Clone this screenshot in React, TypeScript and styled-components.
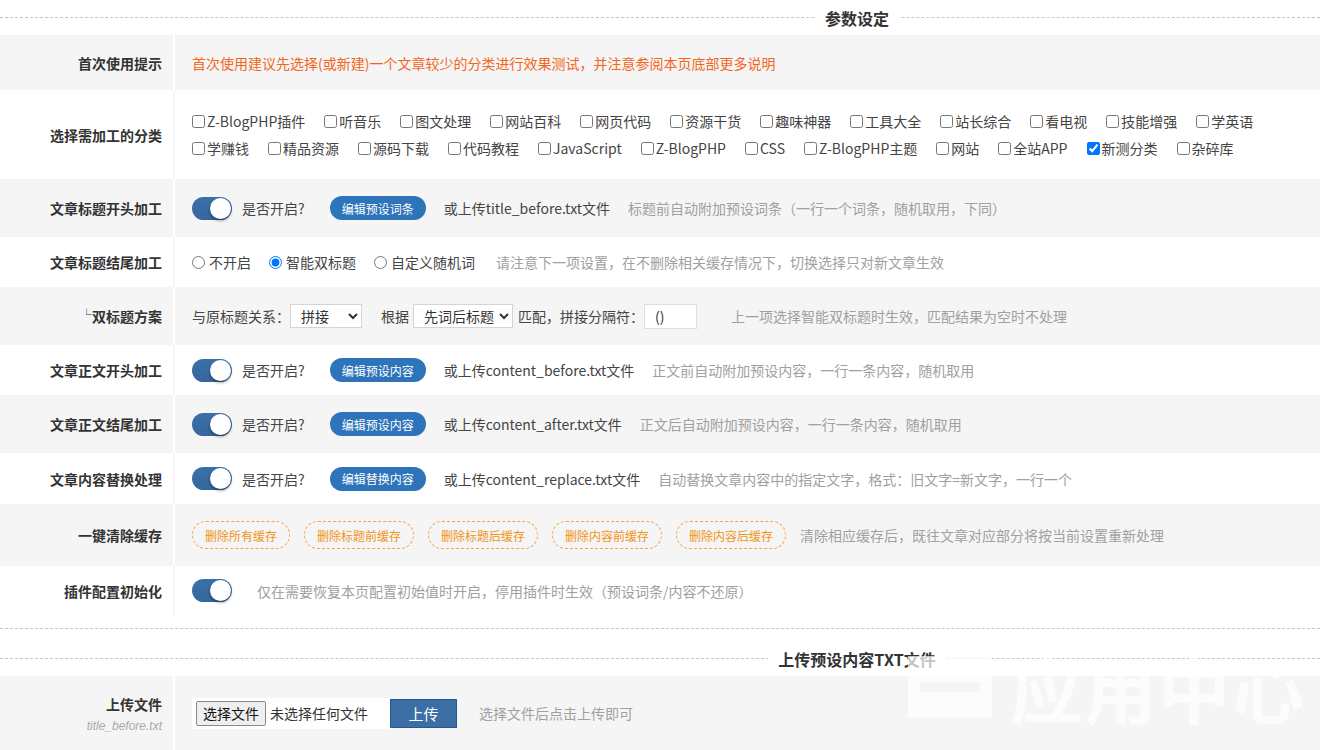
import React from 'react';
import styled, { createGlobalStyle } from 'styled-components';

const Global = createGlobalStyle`
  html, body { margin: 0; padding: 0; background: #fff; }
  body {
    width: 1320px;
    overflow: hidden;
    font-family: "Noto Sans CJK SC", "Noto Sans", sans-serif;
    font-size: 14px;
    color: #444;
  }
  * { box-sizing: border-box; }
`;

const Page = styled.div`
  position: relative;
  width: 1320px;
  height: 750px;
  overflow: hidden;
`;

const SectionHead = styled.div`
  position: relative;
  height: 35px;
  display: flex;
  align-items: center;
  &::before {
    content: '';
    position: absolute;
    left: 0;
    right: 0;
    top: 17px;
    border-top: 1px dashed #c6c6c6;
  }
`;

const SectionTitle = styled.span`
  position: relative;
  margin-left: 857px;
  transform: translateX(-50%);
  background: #fff;
  padding: 0 10px;
  font-size: 16px;
  font-weight: bold;
  color: #333;
  line-height: 20px;
`;

const Divider = styled.div`
  height: 26px;
  padding-top: 13px;
  &::after {
    content: '';
    display: block;
    border-top: 1px dashed #c6c6c6;
  }
`;

const Row = styled.div<{ $alt?: boolean; $h: number }>`
  display: grid;
  grid-template-columns: 175px 1fr;
  min-height: ${(p) => p.$h}px;
  background: ${(p) => (p.$alt ? '#f5f5f5' : '#fff')};
`;

const Label = styled.div<{ $alt?: boolean }>`
  display: flex;
  flex-direction: column;
  justify-content: center;
  align-items: flex-end;
  padding-right: 11px;
  font-weight: bold;
  color: #333;
  font-size: 14px;
  border-right: 2px solid ${(p) => (p.$alt ? '#fff' : '#f6f6f6')};
`;

const Corner = styled.span`
  font-size: 11px;
  font-weight: normal;
  align-self: flex-start;
`;

const LabelLine = styled.span`
  display: inline-flex;
  align-items: flex-start;
`;

const SubLabel = styled.span`
  margin-top: 5px;
  font-weight: normal;
  font-style: italic;
  font-size: 12px;
  color: #aaa;
  font-family: "Liberation Sans", "Noto Sans CJK SC", sans-serif;
`;

const Cell = styled.div<{ $gap?: number }>`
  display: flex;
  align-items: center;
  gap: ${(p) => p.$gap ?? 18}px;
  padding-left: 17px;
`;

const Notice = styled.span`
  color: #f3661c;
`;

const Hint = styled.span<{ $ml?: number }>`
  color: #a0a0a0;
  margin-left: ${(p) => p.$ml ?? 0}px;
`;

const Text = styled.span`
  color: #444;
`;

const CatList = styled.div`
  display: flex;
  flex-direction: column;
  padding-left: 17px;
  justify-content: center;
`;

const CatLine = styled.div`
  display: flex;
  align-items: center;
  height: 27px;
`;

const Check = styled.label`
  display: inline-flex;
  align-items: center;
  margin-right: 19px;
  color: #444;
  input {
    margin: 0 2px 0 0;
    width: 13px;
    height: 13px;
  }
`;

const SwitchGroup = styled.span`
  display: inline-flex;
  align-items: center;
  gap: 10px;
  margin-right: 7px;
  color: #444;
`;

const Toggle = styled.span`
  position: relative;
  display: inline-block;
  width: 40px;
  height: 23px;
  border-radius: 12px;
  background: linear-gradient(#3c6fa9, #35669d);
  &::after {
    content: '';
    position: absolute;
    right: 1px;
    top: 1px;
    width: 21px;
    height: 21px;
    border-radius: 50%;
    background: #fff;
    box-shadow: 0 2px 3px rgba(0, 0, 0, 0.35);
  }
`;

const PillBtn = styled.span`
  display: inline-flex;
  align-items: center;
  height: 24px;
  padding: 0 12px;
  border-radius: 12px;
  background: #2e74ba;
  color: #fff;
  font-size: 12px;
`;

const Radio = styled.label`
  display: inline-flex;
  align-items: center;
  color: #444;
  input {
    margin: 1px 4px 0 0;
    width: 13px;
    height: 13px;
  }
`;

const Select = styled.select<{ $w: number }>`
  width: ${(p) => p.$w}px;
  height: 24px;
  border: 1px solid #d4d4d4;
  border-radius: 0;
  background: #fff;
  font-family: "Noto Sans CJK SC", sans-serif;
  font-size: 14px;
  color: #333;
  padding: 0 2px 0 6px;
`;

const TextInput = styled.input`
  width: 53px;
  height: 25px;
  border: 1px solid #ddd;
  padding: 0 0 0 10px;
  font-size: 14px;
  font-family: "Noto Sans CJK SC", sans-serif;
  color: #333;
`;

const Tight = styled.span<{ $l?: number; $r?: number }>`
  margin-left: ${(p) => p.$l ?? 0}px;
  margin-right: ${(p) => p.$r ?? 0}px;
  color: #444;
`;

const CacheBtn = styled.span`
  display: inline-flex;
  align-items: center;
  height: 28px;
  padding: 0 12px;
  border: 1px dashed #f2a548;
  border-radius: 14px;
  color: #f29418;
  font-size: 12px;
  background: transparent;
`;

const FileBox = styled.span`
  display: inline-flex;
  align-items: center;
  width: 198px;
  height: 31px;
  background: #fff;
  padding-left: 4px;
  margin-right: -18px;
  color: #333;
`;

const FileBtn = styled.span`
  display: inline-flex;
  align-items: center;
  height: 25px;
  padding: 0 6px;
  border: 1px solid #8a8a8a;
  border-radius: 2px;
  background: #efefef;
  color: #111;
  margin-right: 4px;
`;

const UploadBtn = styled.span`
  display: inline-flex;
  align-items: center;
  justify-content: center;
  width: 67px;
  height: 29px;
  background: #3a6ea5;
  border: 1px solid #245a8f;
  color: #fff;
  font-size: 15px;
  margin-right: 4px;
`;

const Watermark = styled.div`
  position: absolute;
  left: 904px;
  top: 634px;
  display: flex;
  align-items: center;
  gap: 14px;
  color: rgba(255, 255, 255, 0.7);
  font-size: 72px;
  font-weight: bold;
  letter-spacing: 2px;
  pointer-events: none;
  font-family: "Noto Sans CJK SC", sans-serif;
`;

const cats1 = ['Z-BlogPHP插件', '听音乐', '图文处理', '网站百科', '网页代码', '资源干货', '趣味神器', '工具大全', '站长综合', '看电视', '技能增强', '学英语'];
const cats2 = ['学赚钱', '精品资源', '源码下载', '代码教程', 'JavaScript', 'Z-BlogPHP', 'CSS', 'Z-BlogPHP主题', '网站', '全站APP', '新测分类', '杂碎库'];

function SwitchRow({ alt, h, label, btn, file, hint }: { alt?: boolean; h: number; label: string; btn: string; file: string; hint: string }) {
  return (
    <Row $alt={alt} $h={h}>
      <Label $alt={alt}>{label}</Label>
      <Cell>
        <SwitchGroup>
          <Toggle />
          是否开启?
        </SwitchGroup>
        <PillBtn>{btn}</PillBtn>
        <Text>{file}</Text>
        <Hint>{hint}</Hint>
      </Cell>
    </Row>
  );
}

export default function App() {
  return (
    <Page>
      <Global />
      <SectionHead>
        <SectionTitle>参数设定</SectionTitle>
      </SectionHead>

      <Row $alt $h={55}>
        <Label $alt>首次使用提示</Label>
        <Cell>
          <Notice>首次使用建议先选择(或新建)一个文章较少的分类进行效果测试，并注意参阅本页底部更多说明</Notice>
        </Cell>
      </Row>

      <Row $h={89}>
        <Label>选择需加工的分类</Label>
        <CatList>
          <CatLine>
            {cats1.map((c) => (
              <Check key={c}>
                <input type="checkbox" readOnly />
                {c}
              </Check>
            ))}
          </CatLine>
          <CatLine>
            {cats2.map((c) => (
              <Check key={c}>
                <input type="checkbox" readOnly checked={c === '新测分类'} />
                {c}
              </Check>
            ))}
          </CatLine>
        </CatList>
      </Row>

      <SwitchRow alt h={58} label="文章标题开头加工" btn="编辑预设词条" file="或上传title_before.txt文件" hint="标题前自动附加预设词条（一行一个词条，随机取用，下同）" />

      <Row $h={50}>
        <Label>文章标题结尾加工</Label>
        <Cell>
          <Radio>
            <input type="radio" name="tail" readOnly />
            不开启
          </Radio>
          <Radio>
            <input type="radio" name="tail" readOnly checked />
            智能双标题
          </Radio>
          <Radio>
            <input type="radio" name="tail" readOnly />
            自定义随机词
          </Radio>
          <Hint $ml={3}>请注意下一项设置，在不删除相关缓存情况下，切换选择只对新文章生效</Hint>
        </Cell>
      </Row>

      <Row $alt $h={58}>
        <Label $alt>
          <LabelLine>
            <Corner>└</Corner>双标题方案
          </LabelLine>
        </Label>
        <Cell $gap={0}>
          <Tight $r={0}>与原标题关系：</Tight>
          <Select $w={72} defaultValue="拼接">
            <option>拼接</option>
          </Select>
          <Tight $l={19} $r={4}>根据</Tight>
          <Select $w={100} defaultValue="先词后标题">
            <option>先词后标题</option>
          </Select>
          <Tight $l={5} $r={0}>匹配，拼接分隔符：</Tight>
          <TextInput readOnly value="()" />
          <Hint $ml={34}>上一项选择智能双标题时生效，匹配结果为空时不处理</Hint>
        </Cell>
      </Row>

      <SwitchRow h={50} label="文章正文开头加工" btn="编辑预设内容" file="或上传content_before.txt文件" hint="正文前自动附加预设内容，一行一条内容，随机取用" />
      <SwitchRow alt h={58} label="文章正文结尾加工" btn="编辑预设内容" file="或上传content_after.txt文件" hint="正文后自动附加预设内容，一行一条内容，随机取用" />
      <SwitchRow h={51} label="文章内容替换处理" btn="编辑替换内容" file="或上传content_replace.txt文件" hint="自动替换文章内容中的指定文字，格式：旧文字=新文字，一行一个" />

      <Row $alt $h={62}>
        <Label $alt>一键清除缓存</Label>
        <Cell $gap={14}>
          <CacheBtn>删除所有缓存</CacheBtn>
          <CacheBtn>删除标题前缓存</CacheBtn>
          <CacheBtn>删除标题后缓存</CacheBtn>
          <CacheBtn>删除内容前缓存</CacheBtn>
          <CacheBtn>删除内容后缓存</CacheBtn>
          <Hint>清除相应缓存后，既往文章对应部分将按当前设置重新处理</Hint>
        </Cell>
      </Row>

      <Row $h={49}>
        <Label>插件配置初始化</Label>
        <Cell $gap={25}>
          <Toggle />
          <Hint>仅在需要恢复本页配置初始值时开启，停用插件时生效（预设词条/内容不还原）</Hint>
        </Cell>
      </Row>

      <Divider />
      <SectionHead>
        <SectionTitle>上传预设内容TXT文件</SectionTitle>
      </SectionHead>

      <Row $alt $h={74}>
        <Label $alt>
          上传文件
          <SubLabel>title_before.txt</SubLabel>
        </Label>
        <Cell $gap={18}>
          <FileBox>
            <FileBtn>选择文件</FileBtn>
            未选择任何文件
          </FileBox>
          <UploadBtn>上传</UploadBtn>
          <Hint>选择文件后点击上传即可</Hint>
        </Cell>
      </Row>

      <Watermark>
        <svg width="92" height="70" viewBox="0 0 92 70" fill="currentColor">
          <path d="M4 4h84v62H4z M16 30h60v10H16z" fillRule="evenodd" />
        </svg>
        <span>应用中心</span>
      </Watermark>
    </Page>
  );
}
